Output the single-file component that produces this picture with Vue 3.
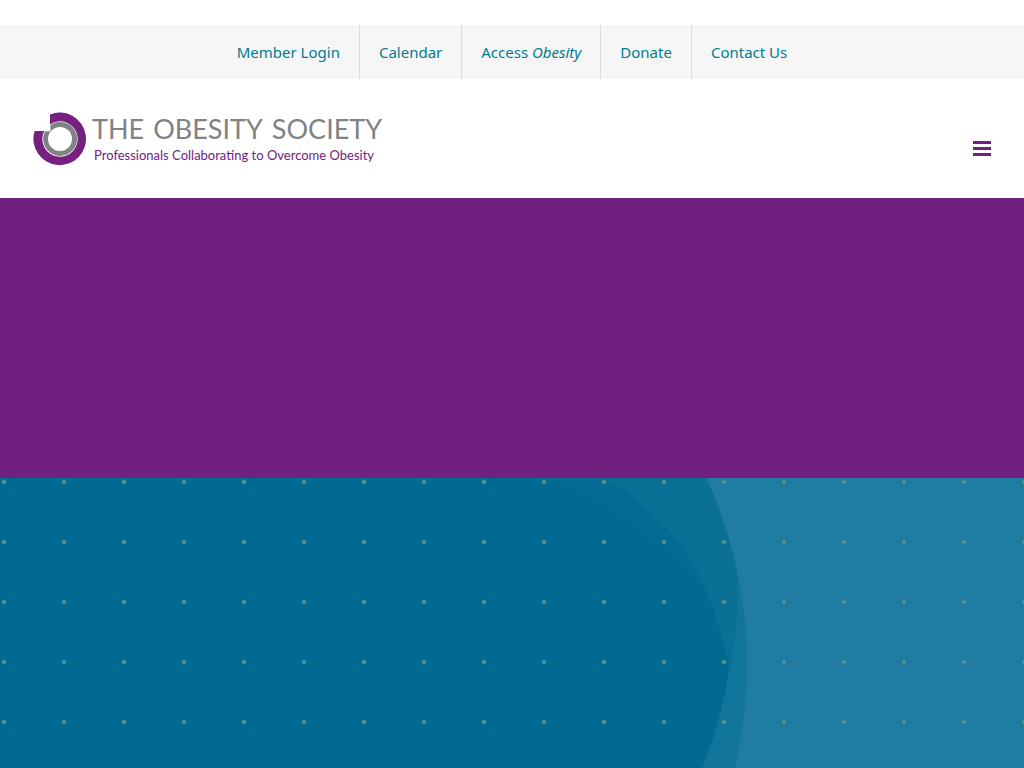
<script setup>
const links = [
  { text: 'Member Login' },
  { text: 'Calendar' },
  { text: 'Access ', em: 'Obesity' },
  { text: 'Donate' },
  { text: 'Contact Us' }
]
</script>

<template>
  <div class="page">
    <nav class="utility" aria-label="Utility">
      <ul>
        <li v-for="link in links" :key="link.text">
          <a href="#">{{ link.text }}<em v-if="link.em">{{ link.em }}</em></a>
        </li>
      </ul>
    </nav>

    <header class="masthead">
      <a class="brand" href="#">
        <svg class="mark" width="54" height="54" viewBox="0 0 54 54" aria-hidden="true">
          <path fill="#76207f" d="M17 2.4A26.3 26.3 0 1 1 1.6 19H11.2A17.7 17.7 0 1 0 17 12.4Z" />
          <path fill="#808285" d="M17.4 13A17 17 0 1 1 12 19.2H17.4Z" />
          <circle cx="27" cy="27" r="12" fill="#fff" />
        </svg>
        <span class="words">
          <span class="name"><span>THE</span><span>OBESITY</span><span>SOCIETY</span></span>
          <span class="tagline">Professionals Collaborating to Overcome Obesity</span>
        </span>
      </a>
      <button class="menu" type="button" aria-label="Menu">
        <svg width="18" height="15" viewBox="0 0 18 15" aria-hidden="true">
          <path fill="#70207e" d="M0 0h18v3H0zM0 6h18v3H0zM0 12h18v3H0z" />
        </svg>
      </button>
    </header>

    <main>
      <section class="banner"></section>
      <section class="feature">
        <svg class="waves" viewBox="0 0 1024 290" preserveAspectRatio="xMidYMin slice" aria-hidden="true">
          <rect width="1024" height="290" fill="#207ca2" />
          <path fill="#12769c" d="M0 0H706Q747 90 747 183Q747 240 735 290H0Z" />
          <path fill="#0a7096" d="M0 0H706Q729 48 738 102Q738 160 729 192L702 290H0Z" />
          <path fill="#046c94" d="M0 0H605C640 20 672 52 690 80Q719 130 729 192Q722 240 702 290H0Z" />
          <path fill="#006a92" d="M0 0H550Q600 22 640 52Q680 80 704 110Q721 150 729 192Q722 240 702 290H0Z" />
        </svg>
      </section>
    </main>
  </div>
</template>

<style>
body {
  background: #fff;
}
</style>

<style scoped>
.page {
  display: flex;
  flex-direction: column;
  min-height: 100vh;
  padding-top: 25px;
  box-sizing: border-box;
  font-family: "Noto Sans", sans-serif;
}

.utility {
  background: #f6f6f6;
}

.utility ul {
  display: flex;
  justify-content: center;
  margin: 0;
  padding: 0;
  list-style: none;
}

.utility li + li {
  border-left: 1px solid #dcdcdc;
}

.utility a {
  display: block;
  padding: 0 19px;
  font-size: 15px;
  line-height: 54px;
  color: #007c92;
  text-decoration: none;
  white-space: pre;
}

.masthead {
  display: flex;
  justify-content: space-between;
  align-items: flex-start;
  padding: 33px 33px 32px;
}

.brand {
  display: flex;
  gap: 5px;
  text-decoration: none;
  font-family: Lato, sans-serif;
  white-space: nowrap;
}

.words {
  display: flex;
  flex-direction: column;
}

.name {
  display: flex;
  gap: 9px;
  font-size: 27px;
  line-height: 34px;
  color: #808285;
}

.tagline {
  padding-left: 2px;
  font-size: 13px;
  line-height: 18px;
  color: #76207f;
}

.menu {
  display: flex;
  margin-top: 29px;
  padding: 0;
  border: 0;
  background: none;
  cursor: pointer;
}

.banner {
  height: 280px;
  background: #70207e;
}

main {
  display: flex;
  flex: 1;
  flex-direction: column;
}

.feature {
  position: relative;
  flex: 1;
  min-height: 290px;
  overflow: hidden;
}

.waves {
  position: absolute;
  inset: 0;
  width: 100%;
  height: 100%;
}

.feature::after {
  content: "";
  position: absolute;
  inset: 0;
  background: radial-gradient(circle at 4px 4px, #5a969a 1px, #38808a 2px, transparent 3px) 0 0 / 60px 60px;
}
</style>
